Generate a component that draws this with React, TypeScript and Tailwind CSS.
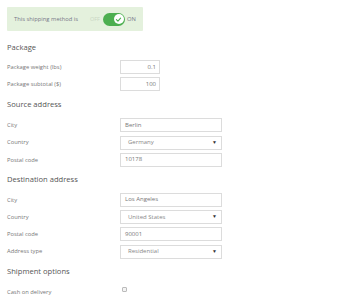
import React from 'react';

const font = { fontFamily: '"Open Sans", "Liberation Sans", sans-serif' };

function Heading({ children, className = '' }: { children: React.ReactNode; className?: string }) {
  return <div className={`text-[7.6px] leading-[12px] text-[#555] ${className}`}>{children}</div>;
}

function Row({ label, children }: { label: string; children: React.ReactNode }) {
  return (
    <div className="flex items-center h-[14px] mb-[3.3px]">
      <div className="w-[113px] text-[5.8px] text-[#777]">{label}</div>
      {children}
    </div>
  );
}

function TextBox({ value, short }: { value: string; short?: boolean }) {
  return (
    <div
      className={`h-[14px] border border-[#dcdcdc] bg-white flex items-center text-[6px] text-[#777] ${
        short ? 'w-[40px] justify-end pr-[3px]' : 'w-[102px] pl-[4px]'
      }`}
    >
      {value}
    </div>
  );
}

function SelectBox({ value }: { value: string }) {
  return (
    <div className="h-[14px] w-[102px] border border-[#dcdcdc] bg-white flex items-center justify-between pl-[7px] pr-[4px] text-[6px] text-[#888]">
      <span>{value}</span>
      <span className="text-[5px] text-[#333]">▼</span>
    </div>
  );
}

export default function App() {
  return (
    <div className="w-[350px] h-[300px] bg-white overflow-hidden px-[7px] pt-[7px]" style={font}>
      <div className="w-[136px] h-[24px] bg-[#e4f1dd] rounded-[1px] flex items-center pl-[7px]">
        <span className="text-[5.8px] text-[#778] w-[76px]">This shipping method is</span>
        <span className="text-[5.5px] text-[#c9d6c4] w-[13px]">OFF</span>
        <div className="w-[22px] h-[13px] rounded-full bg-[#4caf50] flex items-center justify-end pr-[1.5px]">
          <div className="w-[10px] h-[10px] rounded-full bg-white flex items-center justify-center">
            <svg width="7" height="7" viewBox="0 0 10 10">
              <path d="M2 5.2 L4.2 7.3 L8 3" fill="none" stroke="#4caf50" strokeWidth="1.6" strokeLinecap="round" strokeLinejoin="round" />
            </svg>
          </div>
        </div>
        <span className="text-[5.8px] text-[#778] ml-[2px]">ON</span>
      </div>

      <Heading className="mt-[10px] mb-[7px]">Package</Heading>
      <Row label="Package weight (lbs)"><TextBox value="0.1" short /></Row>
      <Row label="Package subtotal ($)"><TextBox value="100" short /></Row>

      <Heading className="mt-[7px] mb-[8px]">Source address</Heading>
      <Row label="City"><TextBox value="Berlin" /></Row>
      <Row label="Country"><SelectBox value="Germany" /></Row>
      <Row label="Postal code"><TextBox value="10178" /></Row>

      <Heading className="mt-[6px] mb-[8px]">Destination address</Heading>
      <Row label="City"><TextBox value="Los Angeles" /></Row>
      <Row label="Country"><SelectBox value="United States" /></Row>
      <Row label="Postal code"><TextBox value="90001" /></Row>
      <Row label="Address type"><SelectBox value="Residential" /></Row>

      <Heading className="mt-[6px] mb-[9px]">Shipment options</Heading>
      <div className="flex items-center h-[14px]">
        <div className="w-[115px] text-[5.8px] text-[#777]">Cash on delivery</div>
        <div className="w-[5px] h-[5px] border border-[#bbb] bg-[#f4f4f4] rounded-[1px] -mt-[6px]" />
      </div>
    </div>
  );
}
